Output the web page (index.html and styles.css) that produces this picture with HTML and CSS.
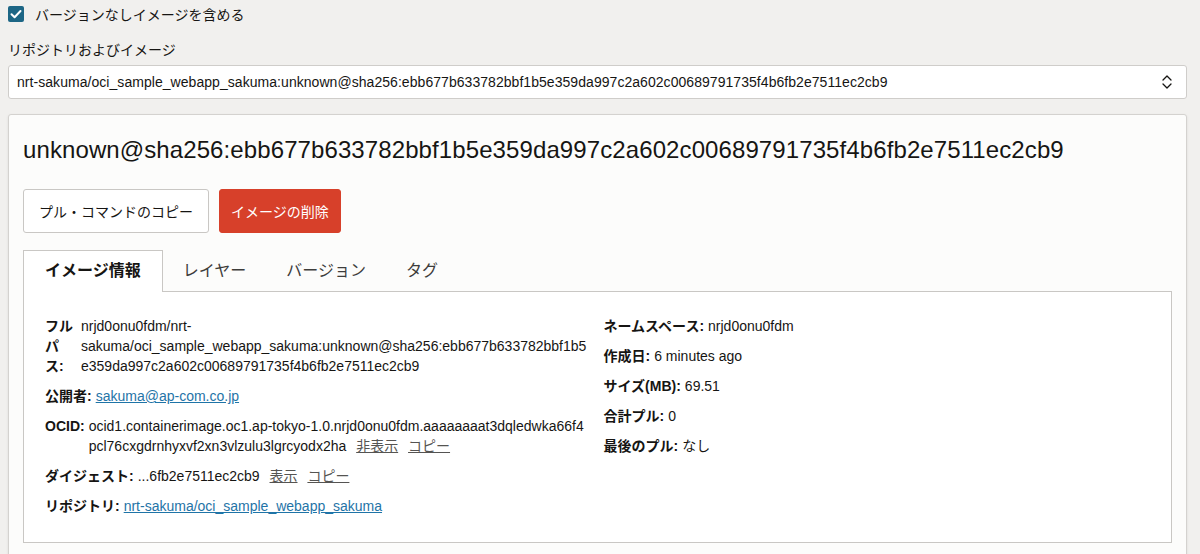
FILE: index.html
```html
<!DOCTYPE html>
<html lang="ja">
<head>
<meta charset="UTF-8">
<title>イメージの詳細</title>
<link rel="stylesheet" href="styles.css">
</head>
<body>
  <div class="page">
    <label class="check">
      <span class="box">
        <svg viewBox="0 0 16 16" width="16" height="16"><path d="M3.5 8.2 6.6 11.2 12.5 5" fill="none" stroke="#fff" stroke-width="2" stroke-linecap="round" stroke-linejoin="round"/></svg>
      </span>
      バージョンなしイメージを含める
    </label>

    <div class="field-label">リポジトリおよびイメージ</div>
    <div class="select">
      <span>nrt-sakuma/oci_sample_webapp_sakuma:unknown@sha256:ebb677b633782bbf1b5e359da997c2a602c00689791735f4b6fb2e7511ec2cb9</span>
      <svg class="chev" viewBox="0 0 10 16" width="10" height="16"><path d="M1 6 5 2 9 6M1 10 5 14 9 10" fill="none" stroke="#161513" stroke-width="1.3" stroke-linecap="round" stroke-linejoin="round"/></svg>
    </div>

    <div class="card">
      <h1 class="title">unknown@sha256:ebb677b633782bbf1b5e359da997c2a602c00689791735f4b6fb2e7511ec2cb9</h1>

      <div class="actions">
        <button class="btn">プル・コマンドのコピー</button>
        <button class="btn danger">イメージの削除</button>
      </div>

      <div class="tabs">
        <div class="tab active">イメージ情報</div>
        <div class="tab">レイヤー</div>
        <div class="tab">バージョン</div>
        <div class="tab">タグ</div>
      </div>

      <div class="panel">
        <div class="col">
          <div class="row">
            <b class="lbl narrow">フル パス:</b>
            <span class="val wrap">nrjd0onu0fdm/nrt-sakuma/oci_sample_webapp_sakuma:unknown@sha256:ebb677b633782bbf1b5e359da997c2a602c00689791735f4b6fb2e7511ec2cb9</span>
          </div>
          <div class="row">
            <b class="lbl">公開者:</b>
            <a class="val link" href="#">sakuma@ap-com.co.jp</a>
          </div>
          <div class="row">
            <b class="lbl">OCID:</b>
            <span class="val breakall">ocid1.containerimage.oc1.ap-tokyo-1.0.nrjd0onu0fdm.aaaaaaaat3dqledwka66f4pcl76cxgdrnhyxvf2xn3vlzulu3lgrcyodx2ha <a class="act" href="#">非表示</a> <a class="act" href="#">コピー</a></span>
          </div>
          <div class="row">
            <b class="lbl">ダイジェスト:</b>
            <span class="val">...6fb2e7511ec2cb9 <a class="act" href="#">表示</a> <a class="act" href="#">コピー</a></span>
          </div>
          <div class="row">
            <b class="lbl">リポジトリ:</b>
            <a class="val link" href="#">nrt-sakuma/oci_sample_webapp_sakuma</a>
          </div>
        </div>
        <div class="col">
          <div class="row"><b class="lbl">ネームスペース:</b><span class="val">nrjd0onu0fdm</span></div>
          <div class="row"><b class="lbl">作成日:</b><span class="val">6 minutes ago</span></div>
          <div class="row"><b class="lbl">サイズ(MB):</b><span class="val">69.51</span></div>
          <div class="row"><b class="lbl">合計プル:</b><span class="val">0</span></div>
          <div class="row"><b class="lbl">最後のプル:</b><span class="val">なし</span></div>
        </div>
      </div>
    </div>
  </div>
</body>
</html>
```
FILE: styles.css
```css
body {
  margin: 0;
  background: #f1f0ee;
  color: #161513;
  font-family: "Liberation Sans", Arial, "Noto Sans CJK JP", sans-serif;
  font-size: 14px;
  overflow: hidden;
}
.page { padding: 0 13px 0 8px; }

.check {
  display: flex;
  align-items: center;
  gap: 11px;
  height: 28px;
}
.box {
  width: 16px; height: 16px;
  border-radius: 2px;
  background: #1d6685;
  display: flex;
}

.field-label { margin-top: 13px; line-height: 18px; }
.select {
  margin-top: 6px;
  height: 32px;
  display: flex;
  align-items: center;
  justify-content: space-between;
  padding: 0 14px 0 8px;
  background: #fff;
  border: 1px solid #cfcdca;
  border-radius: 3px;
  letter-spacing: 0.05px;
}
.chev { display: block; }

.card {
  margin-top: 15px;
  height: 600px;
  background: #fcfcfb;
  border: 1px solid #d4d2cf;
  border-radius: 3px;
  box-shadow: 0 1px 3px rgba(0,0,0,.08);
  padding: 21px 14px 0;
}
.title {
  margin: 0;
  font-size: 24px;
  font-weight: normal;
  line-height: 28px;
  letter-spacing: 0.1px;
}

.actions { display: flex; gap: 10px; margin-top: 25px; }
.btn {
  height: 44px;
  padding: 0 15px;
  font: inherit;
  color: #161513;
  background: #fff;
  border: 1px solid #c9c7c4;
  border-radius: 3px;
}
.btn.danger {
  background: #d7402a;
  border-color: #d7402a;
  color: #fff;
  padding: 0 11px;
}

.tabs { display: flex; margin-top: 17px; }
.tab {
  height: 40px;
  padding: 0 19px;
  font-size: 16px;
  line-height: 40px;
  color: #3e3d3b;
  border: 1px solid transparent;
  border-bottom: none;
}
.tab.active {
  background: #fff;
  font-weight: bold;
  color: #161513;
  border-color: #c9c7c4;
  margin-bottom: -1px;
  height: 41px;
  padding: 0 21px;
}

.panel {
  display: grid;
  grid-template-columns: 1fr 1fr;
  column-gap: 12px;
  height: 252px;
  box-sizing: border-box;
  padding: 24px 21px 0;
  background: #fff;
  border: 1px solid #c9c7c4;
}
.row {
  display: flex;
  gap: 4px;
  line-height: 20px;
  margin-bottom: 10px;
}
.lbl { flex: none; }
.lbl.narrow { width: 32px; }
.val { min-width: 0; }
.wrap { overflow-wrap: anywhere; }
.breakall { word-break: break-all; padding-right: 4px; }
.link { color: #1f74a7; }
.act {
  color: #555452;
  margin-left: 6px;
  word-break: keep-all;
}
```
